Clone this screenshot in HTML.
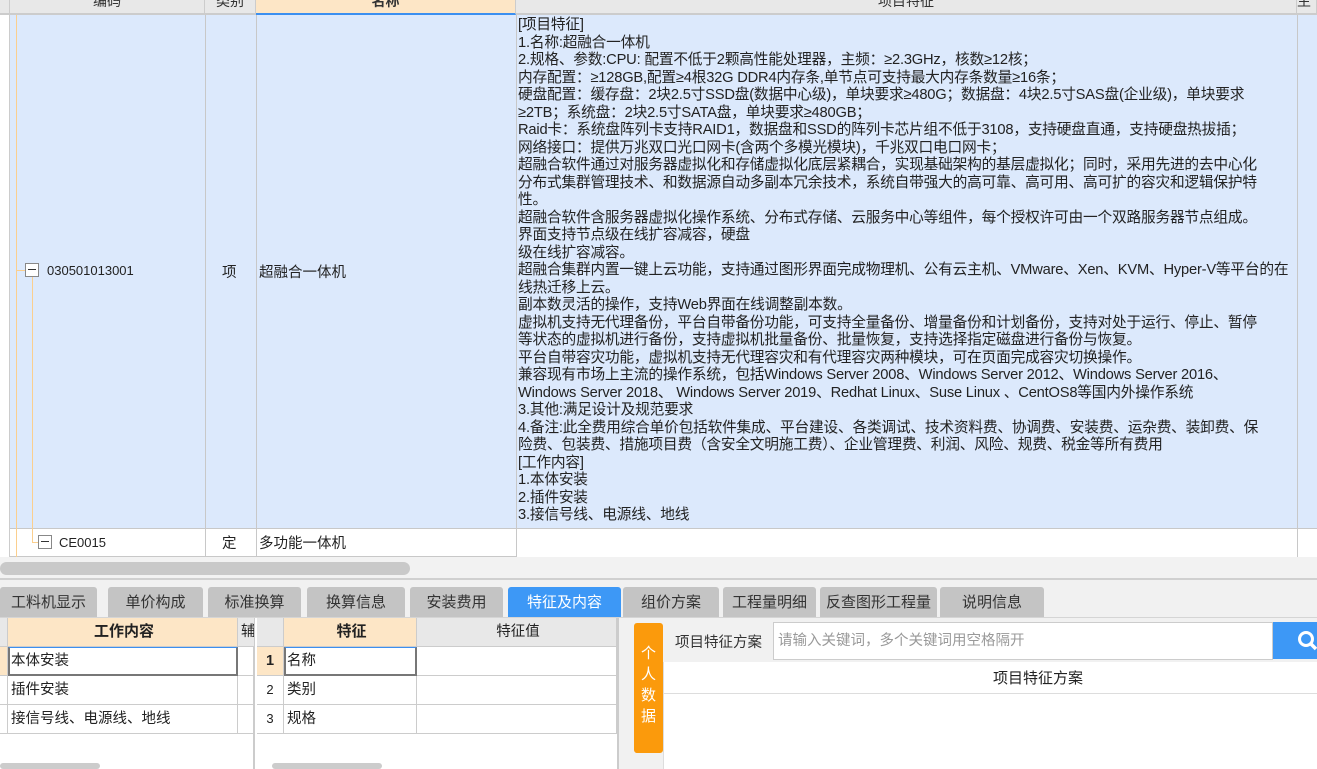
<!DOCTYPE html>
<html><head><meta charset="utf-8"><style>
*{margin:0;padding:0;box-sizing:border-box}
body{width:1317px;height:769px;overflow:hidden;background:#fff;font-family:"Liberation Sans","Noto Sans CJK SC",sans-serif;font-size:14px;color:#222;position:relative}
.a{position:absolute}
.hd{top:0;height:15px;background:#e8e8e8;border-bottom:2px solid #ccc;border-right:1px solid #ccc;font-size:14px;text-align:center;line-height:2px;overflow:hidden;color:#333}
.txt{left:518px;top:17px;font-size:14.7px;line-height:17.5px;white-space:nowrap;color:#222;letter-spacing:-0.2px}
.tab{top:587px;height:30px;background:#c4c4c4;border-radius:3px 3px 0 0;font-size:15px;text-align:center;line-height:32px;color:#333}
.cell{border-right:1px solid #ccc;border-bottom:1px solid #ccc;font-size:14.5px;line-height:28px;padding-left:3px}
</style></head><body>
<div class="a hd" style="left:0;width:10px"></div>
<div class="a hd" style="left:10px;width:195px">编码</div>
<div class="a hd" style="left:205px;width:51px">类别</div>
<div class="a hd" style="left:256px;width:260px;background:#fde6c6;border-bottom:2px solid #3b8ff0;font-weight:bold">名称</div>
<div class="a hd" style="left:516px;width:781px">项目特征</div>
<div class="a hd" style="left:1297px;width:20px;text-align:left">主</div>
<div class="a" style="left:0;top:15px;width:10px;height:542px;border-right:1px solid #ccc"></div>
<div class="a" style="left:10px;top:15px;width:1307px;height:514px;background:#dce9fc;border-bottom:1px solid #c8c8c8"></div>
<div class="a" style="left:205px;top:15px;width:1px;height:542px;background:#c8c8c8"></div>
<div class="a" style="left:256px;top:15px;width:1px;height:542px;background:#c8c8c8"></div>
<div class="a" style="left:516px;top:15px;width:1px;height:542px;background:#c8c8c8"></div>
<div class="a" style="left:1297px;top:15px;width:1px;height:542px;background:#c8c8c8"></div>
<div class="a" style="left:10px;top:556px;width:506px;height:1px;background:#c8c8c8"></div>
<div class="a" style="left:16px;top:15px;width:1px;height:542px;background:#fbcf8e"></div>
<div class="a" style="left:32px;top:276px;width:1px;height:266px;background:#fbcf8e"></div>
<div class="a" style="left:32px;top:542px;width:6px;height:1px;background:#fbcf8e"></div>
<div class="a" style="left:16px;top:270px;width:9px;height:1px;background:#fbcf8e"></div>
<div class="a" style="left:25px;top:263px;width:14px;height:14px;border:1px solid #888;background:#fff"><div class="a" style="left:2px;top:5px;width:8px;height:1px;background:#333"></div></div>
<div class="a" style="left:47px;top:262px;font-size:13px;line-height:17px">030501013001</div>
<div class="a" style="left:222px;top:261px;font-size:14.5px">项</div>
<div class="a" style="left:259px;top:261px;font-size:14.5px">超融合一体机</div>
<div class="a" style="left:38px;top:535px;width:14px;height:14px;border:1px solid #888;background:#fff"><div class="a" style="left:2px;top:5px;width:8px;height:1px;background:#333"></div></div>
<div class="a" style="left:59px;top:534px;font-size:13px;line-height:17px">CE0015</div>
<div class="a" style="left:222px;top:532px;font-size:14.5px">定</div>
<div class="a" style="left:259px;top:532px;font-size:14.5px">多功能一体机</div>
<div class="a txt">[项目特征]<br>1.名称:超融合一体机<br>2.规格、参数:CPU: 配置不低于2颗高性能处理器，主频：≥2.3GHz，核数≥12核；<br>内存配置：≥128GB,配置≥4根32G DDR4内存条,单节点可支持最大内存条数量≥16条；<br>硬盘配置：缓存盘：2块2.5寸SSD盘(数据中心级)，单块要求≥480G；数据盘：4块2.5寸SAS盘(企业级)，单块要求<br>≥2TB；系统盘：2块2.5寸SATA盘，单块要求≥480GB；<br>Raid卡：系统盘阵列卡支持RAID1，数据盘和SSD的阵列卡芯片组不低于3108，支持硬盘直通，支持硬盘热拔插；<br>网络接口：提供万兆双口光口网卡(含两个多模光模块)，千兆双口电口网卡；<br>超融合软件通过对服务器虚拟化和存储虚拟化底层紧耦合，实现基础架构的基层虚拟化；同时，采用先进的去中心化<br>分布式集群管理技术、和数据源自动多副本冗余技术，系统自带强大的高可靠、高可用、高可扩的容灾和逻辑保护特<br>性。<br>超融合软件含服务器虚拟化操作系统、分布式存储、云服务中心等组件，每个授权许可由一个双路服务器节点组成。<br>界面支持节点级在线扩容减容，硬盘<br>级在线扩容减容。<br>超融合集群内置一键上云功能，支持通过图形界面完成物理机、公有云主机、VMware、Xen、KVM、Hyper-V等平台的在<br>线热迁移上云。<br>副本数灵活的操作，支持Web界面在线调整副本数。<br>虚拟机支持无代理备份，平台自带备份功能，可支持全量备份、增量备份和计划备份，支持对处于运行、停止、暂停<br>等状态的虚拟机进行备份，支持虚拟机批量备份、批量恢复，支持选择指定磁盘进行备份与恢复。<br>平台自带容灾功能，虚拟机支持无代理容灾和有代理容灾两种模块，可在页面完成容灾切换操作。<br>兼容现有市场上主流的操作系统，包括Windows Server 2008、Windows Server 2012、Windows Server 2016、<br>Windows Server 2018、 Windows Server 2019、Redhat Linux、Suse Linux 、CentOS8等国内外操作系统<br>3.其他:满足设计及规范要求<br>4.备注:此全费用综合单价包括软件集成、平台建设、各类调试、技术资料费、协调费、安装费、运杂费、装卸费、保<br>险费、包装费、措施项目费（含安全文明施工费）、企业管理费、利润、风险、规费、税金等所有费用<br>[工作内容]<br>1.本体安装<br>2.插件安装<br>3.接信号线、电源线、地线</div>
<div class="a" style="left:0;top:557px;width:1317px;height:21px;background:#f2f2f2"></div>
<div class="a" style="left:0;top:562px;width:410px;height:13px;background:#c9c9c9;border-radius:7px"></div>
<div class="a" style="left:0;top:578px;width:1317px;height:2px;background:#d0d0d0"></div>
<div class="a" style="left:0;top:580px;width:1317px;height:38px;background:#f1f1f1"></div>
<div class="a tab" style="left:0;width:97px">工料机显示</div>
<div class="a tab" style="left:108px;width:95px">单价构成</div>
<div class="a tab" style="left:208px;width:93px">标准换算</div>
<div class="a tab" style="left:307px;width:98px">换算信息</div>
<div class="a tab" style="left:410px;width:93px">安装费用</div>
<div class="a tab" style="left:508px;width:113px;background:#3d98f6;color:#fff">特征及内容</div>
<div class="a tab" style="left:623px;width:96px">组价方案</div>
<div class="a tab" style="left:723px;width:93px">工程量明细</div>
<div class="a tab" style="left:820px;width:117px">反查图形工程量</div>
<div class="a tab" style="left:940px;width:104px">说明信息</div>
<div class="a" style="left:0;top:617px;width:1317px;height:1px;background:#d5d5d5"></div>
<div class="a" style="left:0;top:618px;width:255px;height:151px;background:#fff;border-right:2px solid #ccc"></div>
<div class="a cell" style="left:0;top:618px;width:8px;height:29px;background:#e8e8e8"></div>
<div class="a cell" style="left:8px;top:618px;width:230px;height:29px;background:#fde6c6;font-weight:bold;text-align:center;font-size:15px">工作内容</div>
<div class="a cell" style="left:238px;top:618px;width:17px;height:29px;background:#e8e8e8;overflow:hidden">辅</div>
<div class="a cell" style="left:0;top:647px;width:8px;height:29px;background:#fde6c6"></div>
<div class="a cell" style="left:8px;top:647px;width:230px;height:29px;border:2px solid #777;border-top:1px solid #3b8ff0;padding-left:1px;line-height:26px">本体安装</div>
<div class="a cell" style="left:238px;top:647px;width:17px;height:29px"></div>
<div class="a cell" style="left:0;top:676px;width:8px;height:29px"></div>
<div class="a cell" style="left:8px;top:676px;width:230px;height:29px">插件安装</div>
<div class="a cell" style="left:238px;top:676px;width:17px;height:29px"></div>
<div class="a cell" style="left:0;top:705px;width:8px;height:29px"></div>
<div class="a cell" style="left:8px;top:705px;width:230px;height:29px">接信号线、电源线、地线</div>
<div class="a cell" style="left:238px;top:705px;width:17px;height:29px"></div>
<div class="a" style="left:0;top:763px;width:100px;height:6px;background:#ccc;border-radius:3px"></div>
<div class="a cell" style="left:257px;top:618px;width:27px;height:29px;background:#e8e8e8"></div>
<div class="a cell" style="left:284px;top:618px;width:133px;height:29px;background:#fde6c6;font-weight:bold;text-align:center;font-size:15px">特征</div>
<div class="a cell" style="left:417px;top:618px;width:200px;height:29px;background:#e8e8e8;text-align:center">特征值</div>
<div class="a cell" style="left:257px;top:647px;width:27px;height:29px;background:#fde6c6;font-weight:bold;text-align:center;padding:0">1</div>
<div class="a cell" style="left:284px;top:647px;width:133px;height:29px;border:2px solid #777;border-top:1px solid #3b8ff0;padding-left:1px;line-height:26px">名称</div>
<div class="a cell" style="left:417px;top:647px;width:200px;height:29px"></div>
<div class="a cell" style="left:257px;top:676px;width:27px;height:29px;text-align:center;padding:0;font-size:13px">2</div>
<div class="a cell" style="left:284px;top:676px;width:133px;height:29px">类别</div>
<div class="a cell" style="left:417px;top:676px;width:200px;height:29px"></div>
<div class="a cell" style="left:257px;top:705px;width:27px;height:29px;text-align:center;padding:0;font-size:13px">3</div>
<div class="a cell" style="left:284px;top:705px;width:133px;height:29px">规格</div>
<div class="a cell" style="left:417px;top:705px;width:200px;height:29px"></div>
<div class="a" style="left:617px;top:618px;width:2px;height:151px;background:#ccc"></div>
<div class="a" style="left:272px;top:763px;width:110px;height:6px;background:#ccc;border-radius:3px"></div>
<div class="a" style="left:619px;top:618px;width:698px;height:151px;background:#f1f1f1"></div>
<div class="a" style="left:634px;top:623px;width:29px;height:130px;background:#fb9a0c;border-radius:3px;color:#fff;font-size:15px;line-height:21px;text-align:center;padding-top:20px">个<br>人<br>数<br>据</div>
<div class="a" style="left:663px;top:662px;width:654px;height:107px;background:#fff;border-left:1px solid #ddd"></div>
<div class="a" style="left:675px;top:631px;font-size:14.5px;color:#333">项目特征方案</div>
<div class="a" style="left:773px;top:622px;width:500px;height:38px;background:#fff;border:1px solid #ccc;font-size:14.5px;color:#999;line-height:36px;padding-left:4px">请输入关键词，多个关键词用空格隔开</div>
<div class="a" style="left:1273px;top:622px;width:44px;height:37px;background:#3d98f6"><svg class="a" style="left:24px;top:8px" width="22" height="22" viewBox="0 0 22 22"><circle cx="9" cy="9" r="6.5" fill="none" stroke="#fff" stroke-width="3"/><path d="M13.5 13.5L19 19" stroke="#fff" stroke-width="3.5"/></svg></div>
<div class="a" style="left:663px;top:664px;width:654px;height:30px;border-bottom:1px solid #ddd;text-align:center;font-size:15px;line-height:30px;padding-left:96px;color:#222">项目特征方案</div>
</body></html>
